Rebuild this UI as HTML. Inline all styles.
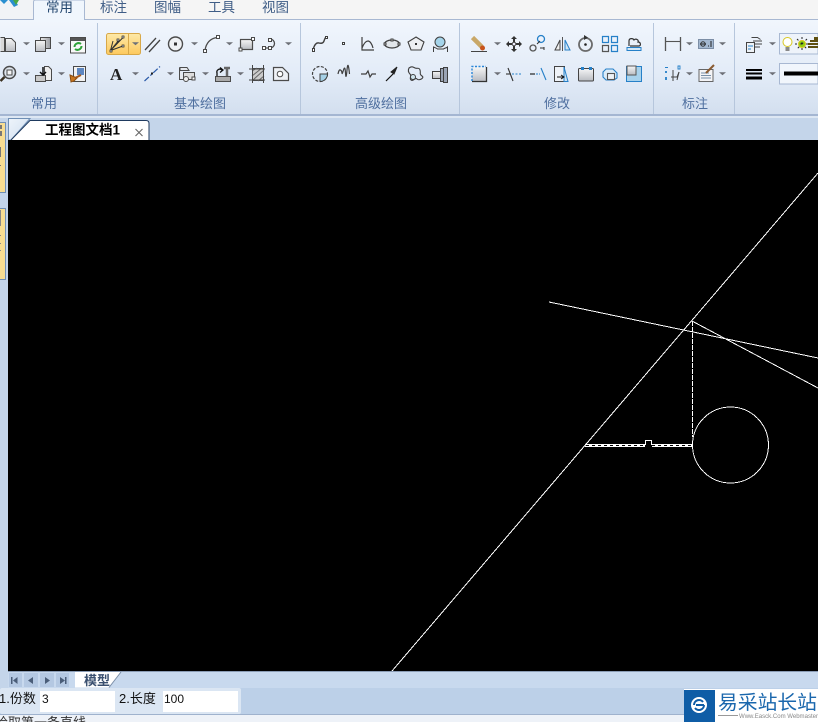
<!DOCTYPE html>
<html><head><meta charset="utf-8"><style>
html,body{margin:0;padding:0;width:818px;height:722px;overflow:hidden;background:#c4d5ea}
svg{position:absolute;left:0;top:0;display:block}
text{font-family:"Liberation Sans","Noto Sans CJK SC",sans-serif}
</style></head><body>
<svg width="818" height="722" viewBox="0 0 818 722" xmlns="http://www.w3.org/2000/svg">
<defs>
<linearGradient id="rb" x1="0" y1="0" x2="0" y2="1"><stop offset="0" stop-color="#f1f6fd"/><stop offset=".6" stop-color="#e2ebf7"/><stop offset="1" stop-color="#d3dfef"/></linearGradient>
<linearGradient id="yb" x1="0" y1="0" x2="0" y2="1"><stop offset="0" stop-color="#fde9a8"/><stop offset="1" stop-color="#fdc95e"/></linearGradient>
<linearGradient id="gy" x1="0" y1="0" x2="0" y2="1"><stop offset="0" stop-color="#f6f6f6"/><stop offset="1" stop-color="#b9bcc2"/></linearGradient>
<linearGradient id="gx" x1="0" y1="0" x2="1" y2="0"><stop offset="0" stop-color="#e8e8e8"/><stop offset="1" stop-color="#9a9da3"/></linearGradient>
<linearGradient id="tb" x1="0" y1="0" x2="1" y2="1"><stop offset="0" stop-color="#eef4fb"/><stop offset="1" stop-color="#cfdeef"/></linearGradient>
</defs>
<!-- top strip -->
<rect width="818" height="19" fill="#f5f5f5"/>
<rect x="0" y="0" width="33" height="19" fill="#f1f3f6"/>
<path d="M0 0h8l-4 4zM9 0h6l3 5-4 2z" fill="#2a8fd0"/><path d="M13 0h6l-3 5z" fill="#49a845"/>
<!-- ribbon -->
<rect y="19" width="818" height="95" fill="url(#rb)"/>
<rect y="19" width="818" height="1" fill="#a8b8d2"/>
<rect y="114" width="818" height="2" fill="#a4b6d2"/>
<rect y="116" width="818" height="2" fill="#dde7f3"/>
<path d="M33.500 20V2q0-2 2-2H83q2 0 1.500 2V19.500" fill="#f0f6fd" stroke="#a8b8d2"/>
<rect x="34" y="18" width="50" height="3" fill="#f0f6fd"/>
<g font-size="13.500" fill="#3f5d86">
<text x="46" y="12" fill="#24476f">常用</text><text x="100" y="12">标注</text><text x="154" y="12">图幅</text><text x="208" y="12">工具</text><text x="262" y="12">视图</text>
</g>
<g fill="#b6c6dc"><rect x="97" y="23" width="1" height="91"/><rect x="300" y="23" width="1" height="91"/><rect x="459" y="23" width="1" height="91"/><rect x="653" y="23" width="1" height="91"/><rect x="734" y="23" width="1" height="91"/></g>
<g font-size="13" fill="#4f6f9f">
<text x="31" y="108">常用</text><text x="174" y="108">基本绘图</text><text x="355" y="108">高级绘图</text><text x="544" y="108">修改</text><text x="682" y="108">标注</text>
</g>
<!-- yellow button -->
<rect x="106.500" y="33.500" width="34" height="21" rx="2" fill="url(#yb)" stroke="#d8a848"/>
<path d="M128.500 34v20" stroke="#d8a848"/>
<!-- dropdown arrows -->
<path transform="translate(0 -.7)" fill="#6e7178" d="M23 43h7l-3.500 3zM58 43h7l-3.500 3zM132 43h7l-3.500 3zM191 43h7l-3.500 3zM226 43h7l-3.500 3zM285 43h7l-3.500 3zM494 43h7l-3.500 3zM686 43h7l-3.500 3zM719 43h7l-3.500 3zM769 43h7l-3.500 3zM23 73h7l-3.500 3zM58 73h7l-3.500 3zM132 73h7l-3.500 3zM167 73h7l-3.500 3zM202 73h7l-3.500 3zM237 73h7l-3.500 3zM494 73h7l-3.500 3zM686 73h7l-3.500 3zM719 73h7l-3.500 3zM769 73h7l-3.500 3z"/>
<!-- group 1 -->
<g fill="none" stroke="#4a4a4a">
<path d="M.5 37.500h4v14h-4" fill="#d8d8d8"/><path d="M5.500 38.500h6l4 4v9h-10z" fill="url(#gy)"/>
<path d="M40.500 37.500h10v11h-10z" fill="url(#gx)"/><path d="M35.500 40.500h10v11h-10z" fill="url(#gy)"/>
<rect x="70.500" y="37.500" width="15" height="15.500" fill="#f8f8f8"/><path d="M71 38h14v3H71z" fill="#555" stroke="none"/>
<path d="M74.500 47a4 4 0 0 1 6.500-3M81.500 46a4 4 0 0 1-6.500 3" stroke="#2fa33a" stroke-width="2"/>
<circle cx="9.500" cy="72.500" r="6" fill="#dfe6ee" stroke-width="1.500"/><rect x="7" y="70" width="5" height="5" fill="#f5f5f5"/><path d="M4.500 77L.5 81" stroke="#3a3020" stroke-width="2.500"/>
<path d="M44.500 66.500h4l3 3v11h-7z" fill="#eee"/><rect x="35.500" y="75.500" width="10" height="6" fill="#c8c8c8"/><path d="M43 67v8M40 72l3 3 3-3" stroke="#111" stroke-width="1.500"/>
<rect x="73.500" y="66.500" width="12" height="15" fill="#f2f2f2"/><rect x="77" y="68" width="7" height="7" fill="#5d86c0" stroke="none"/>
<path d="M70 75l7 3-3 3-3 1z" fill="#c8761f" stroke="#8a4d10"/><path d="M75 78l6-3" stroke="#a0561a" stroke-width="2"/>
</g>
<!-- group 2 row 1 -->
<g fill="none" stroke="#4b4b4b">
<path d="M110.500 50.500L124 36.500M110.500 50.500L119 40M110.500 50.500L123 46M110.500 50.500L113 41" stroke="#333"/>
<path d="M110 50h2v2h-2zM122 36h2v2h-2zM117 39h2v2h-2zM122 45h2v2h-2z" fill="#fff" stroke="#222" stroke-width=".7"/>
<path d="M145 50L156 38M149 52L160 40" stroke="#444" stroke-width="1.300"/>
<circle cx="175.500" cy="44" r="7" fill="#f0f2f5" stroke-width="1.400"/><rect x="174" y="42.500" width="3" height="3" fill="#333" stroke="none"/>
<path d="M205 50Q207 39 217 37.500" stroke-width="1.300"/><path d="M203.500 49.500h3v3h-3zM216.500 35.500h3v3h-3z" fill="#fff"/>
<rect x="240.500" y="39.500" width="12" height="10" fill="url(#gy)" stroke-width="1.200"/><path d="M239 48h3v3h-3zM251.500 37.500h3v3h-3z" fill="#fff"/>
<path d="M265 48h5a4.500 4.500 0 0 0 0-9h-1" stroke-width="1.300"/><path d="M262.500 46.500h3v3h-3zM268.500 46.500h3v3h-3zM268.500 38.500h3v3h-3z" fill="#fff"/>
</g>
<text x="110" y="80" font-size="17" font-weight="bold" style="font-family:'Liberation Serif',serif" fill="#222">A</text>
<g fill="none" stroke="#4b4b4b">
<path d="M144.500 81L160 66.500" stroke="#2a5aa8" stroke-dasharray="6 2 2 2" stroke-width="1.200"/><rect x="151" y="72.500" width="2" height="2" fill="#222" stroke="none"/>
<path d="M180 67.500h7l2 3h-9zM179.500 67.500v12h5" fill="#e6e9ee"/><rect x="183.500" y="72.500" width="11" height="7" fill="#ddd"/><circle cx="186" cy="79" r="2.500" fill="#eee"/><rect x="192" y="77" width="3" height="3" fill="#fff"/>
<rect x="215.500" y="76.500" width="15" height="5" fill="#aaa"/><path d="M217 76v-3a3 3 0 0 1 5-3M220 67.500l3 2.500-3 2.500" stroke="#111" stroke-width="1.300"/><path d="M224 68h6M227 68v8" stroke="#666" stroke-width="2.500"/>
<rect x="252.500" y="68.500" width="11" height="12" fill="#ccc"/><path d="M252 71l5-3M252 76l10-8M253 80l11-10M258 81l6-5" stroke="#666"/><path d="M249 69h16M249 80h16M252.500 65v18M263.500 65v18" stroke="#444"/>
<path d="M273.500 67.500h9l6 6v7h-15z" fill="#eef1f5" stroke-width="1.200"/><circle cx="280" cy="74" r="2.800" fill="#fff"/>
</g>
<!-- group 3 -->
<g fill="none" stroke="#3f3f3f">
<path d="M313 50q2-8 6-7t5-2 2-4" stroke-width="1.400"/><path d="M312.500 48.500h2v3h-2zM325.500 36.500h2v2h-2z" fill="#fff"/>
<rect x="342.500" y="42.500" width="2" height="2" fill="#fff"/>
<path d="M362 37v13h12M362 48c2-5 4-7 6-7s4 3 5 7" stroke-width="1.200"/>
<ellipse cx="392" cy="44" rx="7.500" ry="4" fill="#e2e6ea" stroke-width="1.200"/><path d="M391 39h2v2h-2zM384 43h2v2h-2zM398 43h2v2h-2z" fill="#fff"/>
<path d="M416 37l8 5-3 8h-10l-3-8z" fill="#eceef1" stroke-width="1.100"/><rect x="415" y="43" width="2" height="2" fill="#333" stroke="none"/>
<circle cx="440" cy="42" r="5" fill="#a5d4ea"/><path d="M433.500 52v-5c2 1 3 1 4 2h6c1-1 3-1 4-2v5"/>
<circle cx="320" cy="74" r="7.500" stroke-dasharray="3 1.500" stroke-width="1.200"/><path d="M320 74h7.500a7.500 7.500 0 0 1-7.500 7.500z" fill="#a5d0e6"/>
<path d="M338 74q1-5 2.500-4t1.500 3 1.500-3 2 3 1.500-3 2.500 4" stroke-width="1.200"/>
<path d="M361 74h5l2-3 2 6 2-3h4" stroke-width="1.200"/>
<path d="M386 81l7-7" stroke="#111" stroke-width="1.200"/><path d="M391 72l6-5-3 7z" fill="#222" stroke="#222"/>
<path d="M409 68c3-2 4-1 6 0s4-1 5 2-1 4 2 6-3 5-5 3-4 3-6 1 1-4-1-6-2-4-1-6z" stroke-width="1.100"/><circle cx="413" cy="77" r="2.500" fill="#cfe4ee"/>
<path d="M432.500 71.500h8v7h-8z" fill="url(#gy)"/><path d="M440.500 68.500h3v13h-3zM443.500 67.500h4v15h-4z" fill="#9aa4b4"/>
</g>
<!-- group 4 -->
<path d="M472.500 37.500L482 47" stroke="#c9a868" stroke-width="4.500" fill="none"/><circle cx="482.500" cy="48" r="2.500" fill="#c8541c"/><path d="M471 51.500h16" stroke="#444"/>
<g fill="#333"><path d="M514 36l3 3h-2v3h-2v-3h-2zM514 52l3-3h-2v-3h-2v3h-2zM506 44l3-3v2h3v2h-3v2zM522 44l-3-3v2h-3v2h3v2z"/></g><circle cx="514" cy="44" r="1.800" fill="#eef" stroke="#444"/>
<g fill="none"><circle cx="541" cy="39" r="3.500" stroke="#2680c8" stroke-width="1.300"/><circle cx="533" cy="48" r="3" stroke="#555" stroke-width="1.300"/><path d="M537 44l3-3M540 48h4M544 47v3" stroke="#333"/></g>
<path d="M562.500 37v14" stroke="#555"/><path d="M560 40v10h-5z" fill="#eee" stroke="#444"/><path d="M565 40v10h5z" fill="#cfe4f4" stroke="#2680c8"/>
<circle cx="585.500" cy="44.500" r="6.500" fill="none" stroke="#6a6a6a" stroke-width="1.800"/><circle cx="585.500" cy="44.500" r="1.300" fill="#222"/><path d="M584 35l4 2.500-4 2.500z" fill="#333"/>
<g fill="none" stroke-width="1.200"><path d="M602.500 36.500h6v6h-6zM611.500 36.500h6v6h-6zM611.500 45.500h6v6h-6z" stroke="#2680c8"/><path d="M602.500 45.500h6v6h-6z" stroke="#555"/></g>
<path d="M629 46v-5c0-3 4-3 5-1 2-2 5 0 4 2 3 0 3 4 1 4h-9" fill="none" stroke="#333" stroke-width="1.200"/><path d="M627 47.500h14v3h-14z" fill="#d5e8f7" stroke="#2680c8"/>
<rect x="472" y="67" width="14" height="14" fill="url(#gy)"/>
<path d="M472 81V66.500H486" fill="none" stroke="#2a86d8" stroke-dasharray="2 1.500" stroke-width="1.400"/><path d="M486.500 67v14.500H472" fill="none" stroke="#333" stroke-width="1.300"/>
<g fill="none" stroke-width="1.100"><path d="M506 74h5" stroke="#333"/><path d="M508 68l5 13" stroke="#333"/><path d="M512 74h9" stroke="#2680c8" stroke-dasharray="2 1.500"/><path d="M530 74h5" stroke="#111"/><path d="M536 74h4" stroke="#2680c8" stroke-dasharray="2 1"/><path d="M541 68l5 12" stroke="#2680c8"/></g>
<path d="M554.500 66.500h10v15h-10z" fill="#eef2f7" stroke="#444"/><path d="M564 67l4 14.500h-4z" fill="#cfe4f4" stroke="#2680c8"/><path d="M557 77h6M561 75l3 2-3 2" stroke="#111" fill="none"/>
<rect x="578.500" y="68.500" width="15" height="12.500" rx="1" fill="url(#gy)" stroke="#444"/><rect x="581" y="67" width="3" height="3" fill="#2680c8"/><rect x="589" y="67" width="3" height="3" fill="#2680c8"/>
<g fill="none" stroke-width="1.100"><path d="M603 72l3-3h7l4 4v5l-3 2h-8l-3-3z" stroke="#2680c8" fill="#dcecf8"/><rect x="607.500" y="73.500" width="7" height="6" stroke="#555" fill="#eef2f6"/></g>
<rect x="626.500" y="66.500" width="15" height="15" fill="#a8d2ec" stroke="#2680c8"/><rect x="627" y="66" width="9" height="9" fill="url(#gy)" stroke="#555"/>
<!-- group 5 -->
<g fill="none" stroke="#555"><path d="M665.500 37v14M680.500 37v14" stroke-width="1.300"/><path d="M666 41.500h14" stroke-width="1.100"/></g>
<rect x="698.500" y="39.500" width="15" height="9" fill="#a4b8d0" stroke="#7c8ea6"/><circle cx="703" cy="44" r="2.200" fill="none" stroke="#333"/><path d="M700 44h6M708 46h1M711 41v6" stroke="#222"/>
<g fill="none"><path d="M671 77h6l2-5" stroke="#444"/><path d="M673 70v11M679 72l-2 8" stroke="#444"/><path d="M666 71v2M666 77v3" stroke="#2680c8" stroke-width="1.800"/><path d="M678 66h2v3h-2z" stroke="#2680c8" stroke-width=".9"/><path d="M665 67.500h3" stroke="#2680c8"/></g>
<rect x="699" y="69.500" width="14" height="12" fill="#f4f4f6" stroke="#666"/><path d="M701 73h8M701 75.500h10M701 78h10" stroke="#7890a8"/><path d="M706 73l8-8" stroke="#8a5a30" stroke-width="2"/>
<!-- group 6 -->
<path d="M751.500 37.500h6l3 2" fill="none" stroke="#444"/><path d="M753 41h9M754 44h8M754 47h6" stroke="#444" fill="none"/><rect x="746.500" y="42.500" width="8" height="10" fill="#eef2f6" stroke="#444"/><path d="M748 46h5M748 49h3" stroke="#2680c8"/>
<rect x="746" y="69" width="16" height="2" fill="#000"/><rect x="746" y="72.500" width="16" height="2" fill="#000"/><rect x="746" y="76.500" width="16" height="3" fill="#000"/>
<path d="M779.500 33.500H818V54H779.500z" fill="#eef3fa" stroke="#a8b8d2"/>
<circle cx="787.500" cy="42" r="4.500" fill="#fff" stroke="#d8c820"/><path d="M785.500 47h4v4h-4z" fill="#888"/>
<circle cx="802" cy="44" r="3.500" fill="#8fd010" stroke="#d8c820"/><path d="M802 37v14M795 44h14M797 39l10 10M807 39l-10 10" stroke="#222" stroke-dasharray="2 3.500" stroke-dashoffset="0"/>
<path d="M810 41h8M808 44h10M808 47h10" stroke="#5e4f10" stroke-width="2"/><path d="M814 37h4v3h-4z" fill="#5e4f10"/>
<path d="M779.500 63.500H818V84H779.500z" fill="#f1f6fc" stroke="#a8b8d2"/><rect x="784" y="71.500" width="34" height="4" fill="#000"/>
<!-- body -->
<rect y="118" width="818" height="604" fill="#c4d5ea"/>
<rect x="0" y="122" width="5.500" height="71" fill="#f7dd92"/><path d="M0 122.500H5.500V192.500H0" fill="none" stroke="#6f8fb5"/>
<rect x="0" y="208" width="5.500" height="72" fill="#f7dd92"/><path d="M0 208.500H5.500V279.500H0" fill="none" stroke="#6f8fb5"/>
<path d="M0 125h2v4H0zM0 131h2v5H0zM0 147h1v10H0zM0 165h1v1H0z" fill="#777"/><path d="M0 210h1v16H0zM0 235h1v1H0zM0 243h1v1H0zM0 250h1v1H0z" fill="#888"/>
<!-- doc tab -->
<path d="M8.500 140V118.500H30L11 140z" fill="url(#tb)" stroke="#6f8fb5" stroke-width="1"/>
<path d="M11 140L30 120.500H146q3 0 3 3V140z" fill="#fff"/>
<path d="M11 140L30 120.500H146q3 0 3 3V140" fill="none" stroke="#1f3a5f"/>
<text x="45" y="134.500" font-size="13.500" font-weight="bold" fill="#000">工程图文档1</text>
<path d="M135.500 129l7 7M142.500 129l-7 7" stroke="#666" stroke-width="1.100"/>
<!-- canvas -->
<rect x="8" y="140" width="810" height="531" fill="#000"/>
<g fill="none" stroke="#fff" shape-rendering="crispEdges">
<path d="M392 671L818 173"/>
<path d="M549 302L818 358"/>
<path d="M692 321L818 388"/>
<path d="M692.500 321V437" stroke-dasharray="5 1"/>
<circle cx="730.500" cy="445" r="38"/>
<path d="M585 444.500H645M652 444.500H692"/><path d="M585 446.500H645M652 446.500H692"/>
<path d="M586 445.500H645M652 445.500H692" stroke="#fff"/>
<path d="M586 445.500H645M652 445.500H692" stroke="#000" stroke-dasharray="3 3"/>
<path d="M645.500 445V440.500H651.500V445"/>
</g>
<!-- bottom tabs -->
<rect x="8" y="671" width="810" height="1" fill="#8a9cb5"/>
<rect x="8" y="672" width="810" height="16" fill="#c8d9ee"/>
<rect x="0" y="672" width="8" height="16" fill="#c4d5ea"/>
<g fill="#b4c8e2"><rect x="9" y="673" width="13" height="14"/><rect x="24" y="673" width="14" height="14"/><rect x="40" y="673" width="14" height="14"/><rect x="56" y="673" width="13" height="14"/></g>
<g fill="#4a5d78">
<path d="M11 677h1.500v7H11zM17.500 677v7l-4.500-3.500zM33 677v7l-5-3.500zM45 677l5 3.500-5 3.500zM60 677l5 3.500-5 3.500zM65 677h1.500v7H65z"/>
</g>
<path d="M75 672v15.500h34L121 672z" fill="#fff"/>
<path d="M109 687.500L121 672" stroke="#7a8ea8" fill="none"/>
<text x="84" y="685" font-size="13" font-weight="bold" fill="#3a5070">模型</text>
<!-- command bar -->
<rect x="0" y="688" width="818" height="26" fill="#bcd0e8"/>
<rect x="0" y="688" width="241" height="26" rx="2" fill="#dbe6f3"/>
<rect x="40" y="691" width="75" height="21" fill="#fff"/>
<rect x="163" y="691" width="75" height="21" fill="#fff"/>
<g font-size="13" fill="#111">
<text x="-1" y="703">1.份数</text><text x="119" y="703">2.长度</text>
<text x="42" y="703" font-size="12">3</text><text x="164" y="703" font-size="12">100</text>
</g>
<rect x="0" y="714" width="818" height="8" fill="#eef2f8"/>
<rect x="0" y="714" width="818" height="1" fill="#9fb2cd"/>
<text x="-5" y="727" font-size="13" fill="#333">拾取第一条直线</text>
<!-- watermark -->
<rect x="684" y="689" width="134" height="33" fill="#fff"/>
<rect x="684" y="690" width="31" height="32" fill="#0f5da6"/>
<circle cx="699" cy="705" r="8" fill="#fff"/>
<path d="M694 705a5 5 0 0 1 9-3M704 705a5 5 0 0 1-9 3M696 705h8" fill="none" stroke="#0f5da6" stroke-width="2"/>
<text x="718" y="709" font-size="19.500" fill="#1a67ad" textLength="99" lengthAdjust="spacingAndGlyphs">易采站长站</text>
<path d="M718 715.500h20" stroke="#999"/>
<text x="739" y="718" font-size="6.500" fill="#888" textLength="79" lengthAdjust="spacingAndGlyphs">Www.Easck.Com Webmaster</text>
</svg>
</body></html>
